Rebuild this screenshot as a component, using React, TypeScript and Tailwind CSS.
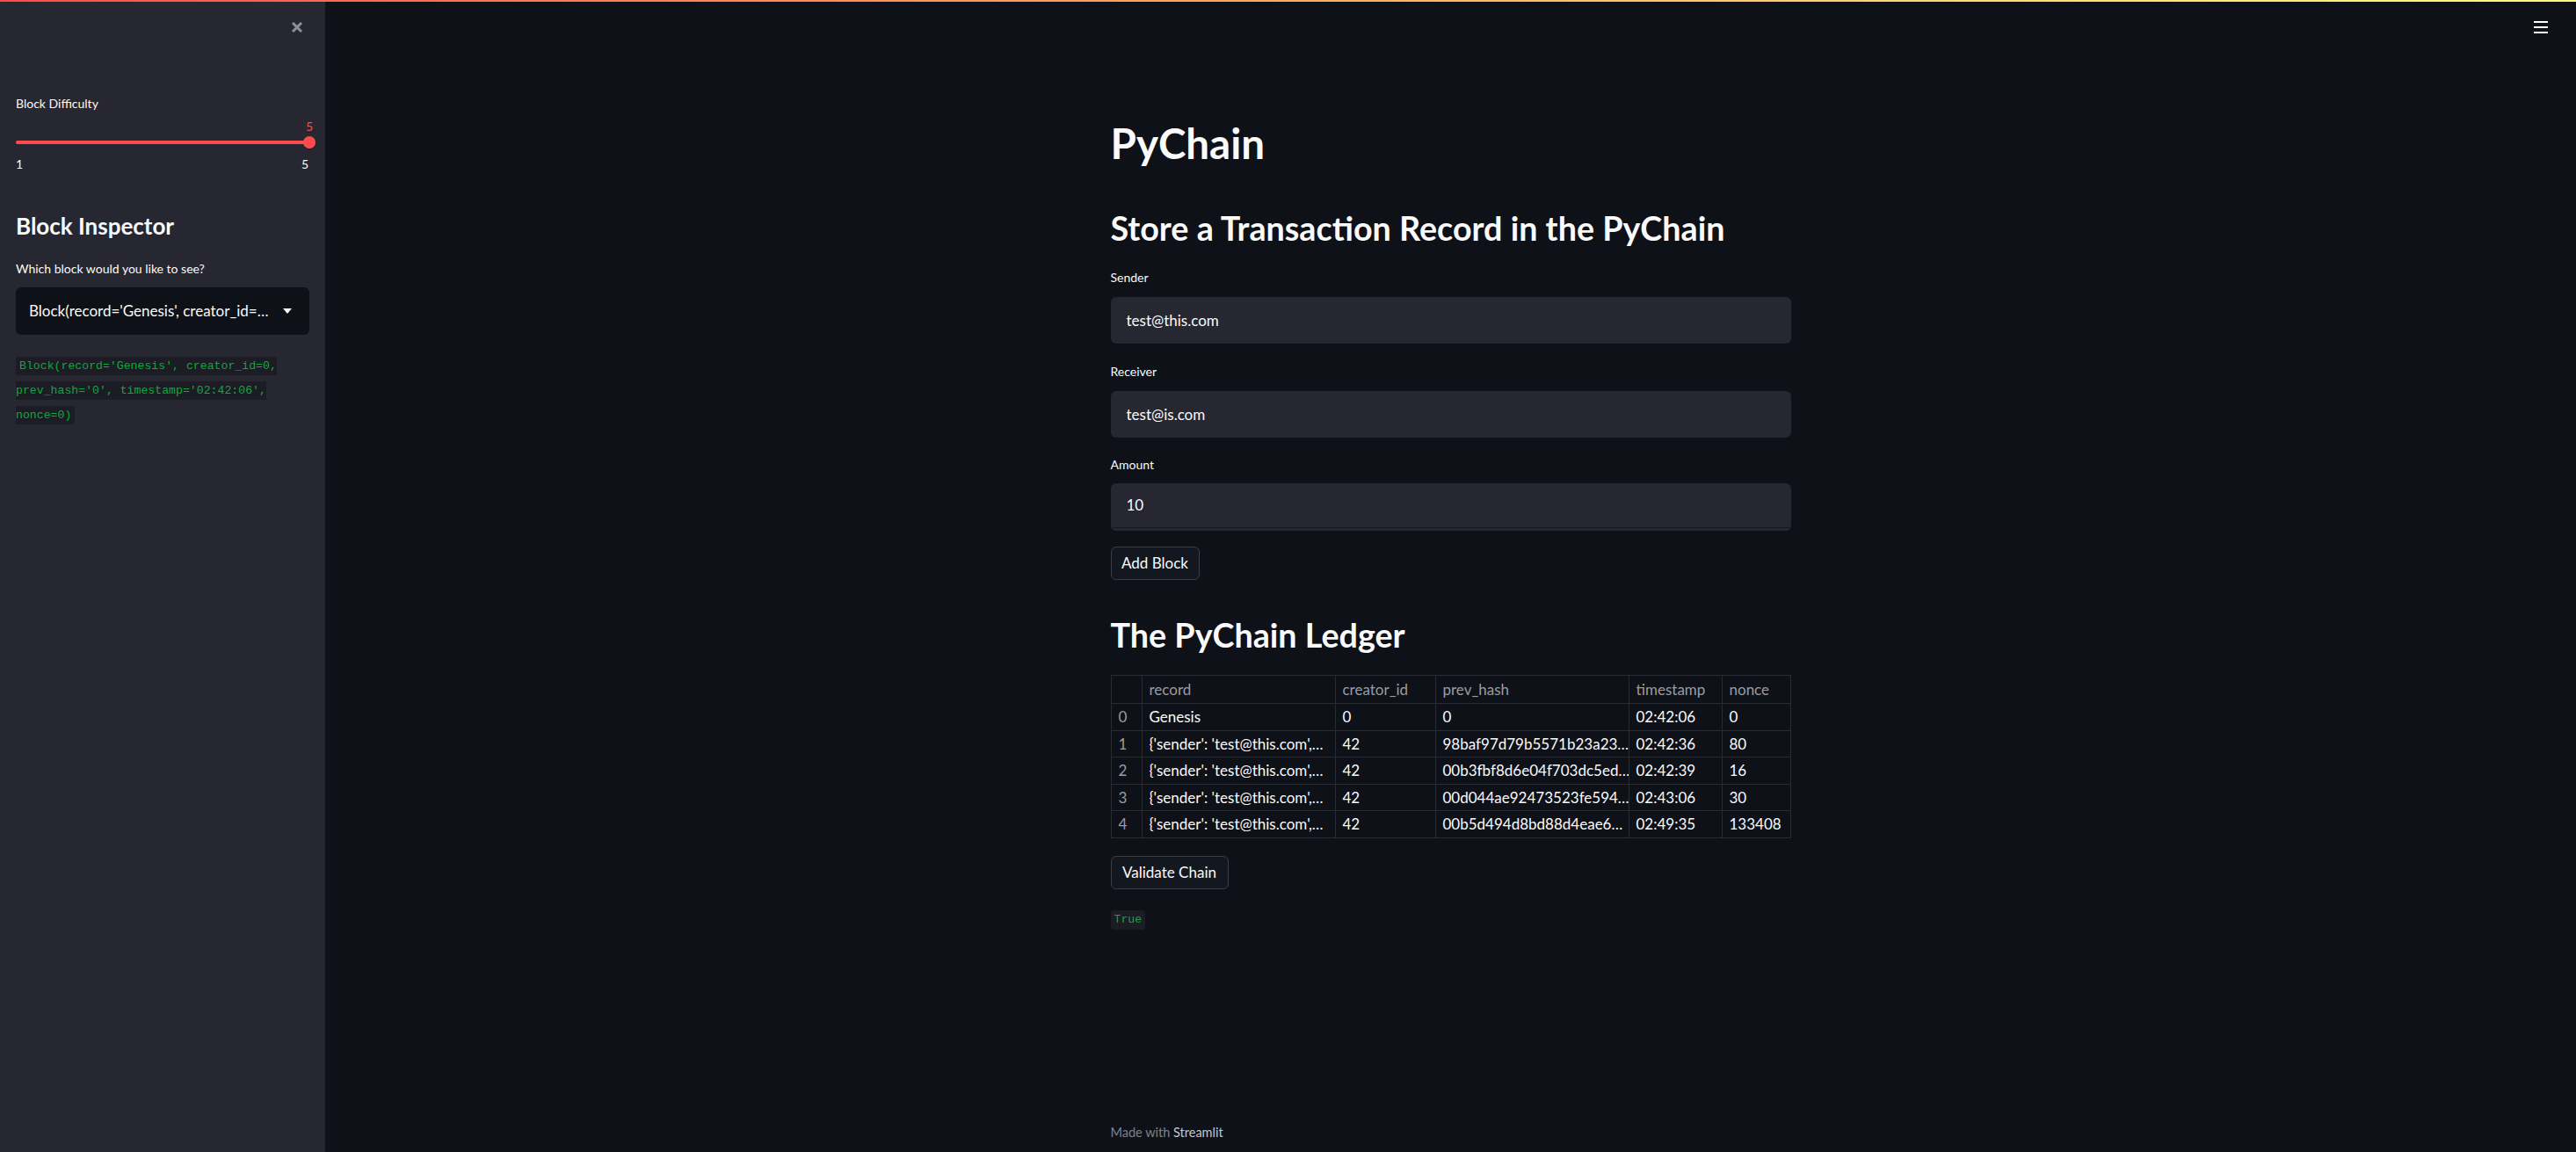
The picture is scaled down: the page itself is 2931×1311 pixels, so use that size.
import React from "react";

const rows = [
  { i: "0", record: "Genesis", creator: "0", prev: "0", ts: "02:42:06", nonce: "0" },
  { i: "1", record: "{'sender': 'test@this.com',…", creator: "42", prev: "98baf97d79b5571b23a23…", ts: "02:42:36", nonce: "80" },
  { i: "2", record: "{'sender': 'test@this.com',…", creator: "42", prev: "00b3fbf8d6e04f703dc5ed…", ts: "02:42:39", nonce: "16" },
  { i: "3", record: "{'sender': 'test@this.com',…", creator: "42", prev: "00d044ae92473523fe594…", ts: "02:43:06", nonce: "30" },
  { i: "4", record: "{'sender': 'test@this.com',…", creator: "42", prev: "00b5d494d8bd88d4eae6…", ts: "02:49:35", nonce: "133408" },
];

function Cell({ w, children, gray, last }: { w: string; children?: React.ReactNode; gray?: boolean; last?: boolean }) {
  return (
    <div
      className={`${w} shrink-0 h-full flex items-center px-[8px] overflow-hidden whitespace-nowrap ${last ? "" : "border-r border-[#2a2c33]"} ${gray ? "text-[#9a9ca3]" : "text-[#fafafa]"}`}
    >
      {children}
    </div>
  );
}

function Row({ cells, header, height }: { cells: string[]; header?: boolean; height: string }) {
  return (
    <div className={`flex ${height} border-b border-[#2a2c33]`}>
      <Cell w="w-[35px]" gray>{cells[0]}</Cell>
      <Cell w="w-[220px]" gray={header}>{cells[1]}</Cell>
      <Cell w="w-[114px]" gray={header}>{cells[2]}</Cell>
      <Cell w="w-[220px]" gray={header}>{cells[3]}</Cell>
      <Cell w="w-[106px]" gray={header}>{cells[4]}</Cell>
      <Cell w="w-[77px]" gray={header} last>{cells[5]}</Cell>
    </div>
  );
}

export default function App() {
  return (
    <div className="relative flex h-[1311px] w-[2931px] overflow-hidden bg-[#0e1117] text-[#fafafa] font-['Lato','Noto_Sans',sans-serif]">
      {/* decoration bar */}
      <div className="absolute top-0 left-0 right-0 h-[2px] bg-linear-to-r from-[#ff4b4b] to-[#fffd80] z-10" />

      {/* Sidebar */}
      <aside className="w-[370px] shrink-0 h-full bg-[#262730] flex flex-col">
        <div className="h-[62px] flex items-center justify-end pr-[24px]">
          <svg width="16" height="16" viewBox="0 0 16 16">
            <path d="M3 3 L13 13 M13 3 L3 13" stroke="#8d8f99" strokeWidth="3" strokeLinecap="butt" />
          </svg>
        </div>
        <div className="px-[18px] flex flex-col">
          <div className="mt-[46px] h-[20px] leading-[20px] text-[14px]">Block Difficulty</div>
          <div className="mt-[6px] h-[20px] leading-[20px] text-[14px] text-[#ff4b4b] flex justify-end mr-[-4px]">5</div>
          <div className="mt-[1px] h-[14px] relative">
            <div className="absolute left-0 right-0 top-[5px] h-[4px] rounded-full bg-[#ff4b4b]" />
            <div className="absolute right-[-7px] top-0 w-[14px] h-[14px] rounded-full bg-[#ff4b4b]" />
          </div>
          <div className="mt-[8px] h-[20px] leading-[20px] text-[14px] flex justify-between pr-[1px]">
            <span>1</span>
            <span>5</span>
          </div>
          <div className="mt-[42px] h-[36px] leading-[36px] text-[26px] font-bold">Block Inspector</div>
          <div className="mt-[21px] h-[20px] leading-[20px] text-[14px]">Which block would you like to see?</div>
          <div className="mt-[11px] h-[54px] rounded-[6px] bg-[#0e1117] flex items-center pl-[15px] pr-[20px] justify-between">
            <span className="text-[17px] whitespace-nowrap">Block(record='Genesis', creator_id=…</span>
            <svg width="10" height="6" viewBox="0 0 10 6">
              <path d="M0 0 L10 0 L5 6 Z" fill="#fafafa" />
            </svg>
          </div>
          <div className="mt-[22px] leading-[28px] text-[13.2px] font-['Liberation_Mono',monospace]">
            <code className="bg-[#1b1c24] text-[#09ab3b] px-[4px] py-[3px] rounded-[3px]">
              Block(record='Genesis', creator_id=0, prev_hash='0', timestamp='02:42:06', nonce=0)
            </code>
          </div>
        </div>
      </aside>

      {/* Main */}
      <main className="relative flex-1 h-full flex flex-col items-center">
        <div className="absolute right-[32px] top-[24px] flex flex-col gap-[4px]">
          <div className="w-[16px] h-[2px] bg-white" />
          <div className="w-[16px] h-[2px] bg-white" />
          <div className="w-[16px] h-[2px] bg-white" />
        </div>

        <div className="w-[774px] flex flex-col flex-1">
          <h1 className="mt-[133px] h-[60px] leading-[60px] text-[47.5px] font-bold">PyChain</h1>
          <h2 className="mt-[42px] h-[50px] leading-[50px] text-[37.7px] font-bold whitespace-nowrap">Store a Transaction Record in the PyChain</h2>

          <div className="mt-[21px] h-[20px] leading-[20px] text-[14px]">Sender</div>
          <div className="mt-[12px] h-[53px] rounded-[6px] bg-[#262730] flex items-center px-[18px] text-[17px]">test@this.com</div>

          <div className="mt-[22px] h-[20px] leading-[20px] text-[14px]">Receiver</div>
          <div className="mt-[12px] h-[53px] rounded-[6px] bg-[#262730] flex items-center px-[18px] text-[17px]">test@is.com</div>

          <div className="mt-[21px] h-[20px] leading-[20px] text-[14px]">Amount</div>
          <div className="mt-[11px] h-[54px] rounded-[6px] bg-[#262730] flex flex-col px-[2px]">
            <div className="flex-1 flex items-center px-[16px] text-[17px]">10</div>
            <div className="h-[1px] bg-[#16171d] mb-[3px]" />
          </div>

          <div className="mt-[18px] flex">
            <button className="h-[38px] w-[101px] rounded-[6px] border border-[#3c3e45] bg-[#131720] text-[17px] text-[#fafafa]">Add Block</button>
          </div>

          <h2 className="mt-[38px] h-[50px] leading-[50px] text-[37.7px] font-bold">The PyChain Ledger</h2>

          <div className="mt-[20px] border-t border-l border-r border-[#2a2c33] text-[17px]">
            <Row header height="h-[32px]" cells={["", "record", "creator_id", "prev_hash", "timestamp", "nonce"]} />
            {rows.map((r) => (
              <Row key={r.i} height="h-[30.6px]" cells={[r.i, r.record, r.creator, r.prev, r.ts, r.nonce]} />
            ))}
          </div>

          <div className="mt-[20px] flex">
            <button className="h-[38px] w-[134px] rounded-[6px] border border-[#3c3e45] bg-[#131720] text-[17px] text-[#fafafa]">Validate Chain</button>
          </div>

          <div className="mt-[24px] h-[22px] flex">
            <code className="flex h-[22px] items-center px-[4px] rounded-[3px] bg-[#1b1c24] text-[#09ab3b] text-[13.2px] font-['Liberation_Mono',monospace]">True</code>
          </div>

          <div className="mt-auto mb-[12px] h-[20px] leading-[20px] text-[14.5px] text-[#7f828c]">
            Made with <span className="text-[#c4c6cc]">Streamlit</span>
          </div>
        </div>
      </main>
    </div>
  );
}
